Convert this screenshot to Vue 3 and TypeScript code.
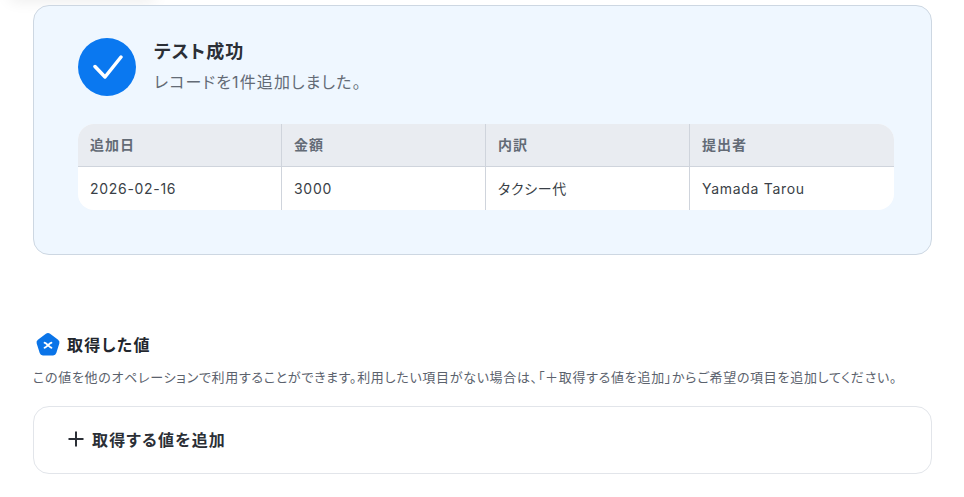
<template>
  <div class="page">
    <div class="top-glow"></div>
    <section class="result-card">
      <div class="result-head">
        <div class="check-circle">
          <svg width="32" height="26" viewBox="0 0 32 26" fill="none">
            <path d="M4 12.5 L14 23 L30 3" stroke="#fff" stroke-width="3.5" stroke-linecap="round" stroke-linejoin="round" />
          </svg>
        </div>
        <div class="result-text">
          <h2>テスト成功</h2>
          <p>レコードを1件追加しました。</p>
        </div>
      </div>

      <div class="table">
        <div v-for="col in COLUMNS" :key="col" class="cell th">{{ col }}</div>
        <div v-for="val in ROW" :key="val" class="cell td">{{ val }}</div>
      </div>
    </section>

    <div class="values-title">
      <svg class="pentagon" width="26" height="25" viewBox="0 0 26 24">
        <path d="M10.9 1.2 a3.4 3.4 0 0 1 4.2 0 l8 6 a3.4 3.4 0 0 1 1.2 3.8 l-3 9.6 a3.4 3.4 0 0 1 -3.3 2.4 h-10 a3.4 3.4 0 0 1 -3.3 -2.4 l-3 -9.6 a3.4 3.4 0 0 1 1.2 -3.8 z" fill="#0a74e8" />
        <path d="M9.6 10.2 C11.5 10.2 14.5 15.2 16.4 15.2 M16.4 10.2 C14.5 10.2 11.5 15.2 9.6 15.2" stroke="#fff" stroke-width="1.9" fill="none" stroke-linecap="round" />
      </svg>
      <h3>取得した値</h3>
    </div>
    <p class="values-desc">この値を他のオペレーションで利用することができます。利用したい項目がない場合は、「＋取得する値を追加」からご希望の項目を追加してください。</p>

    <div class="add-box">
      <svg width="16" height="16" viewBox="0 0 16 16">
        <path d="M8 0.5 V15.5 M0.5 8 H15.5" stroke="#2b2f36" stroke-width="2" />
      </svg>
      <span>取得する値を追加</span>
    </div>
  </div>
</template>

<script setup lang="ts">
const COLUMNS = ['追加日', '金額', '内訳', '提出者']
const ROW = ['2026-02-16', '3000', 'タクシー代', 'Yamada Tarou']
</script>

<style>
html,
body {
  background: #fff;
  overflow: hidden;
}
</style>

<style scoped>
.page {
  position: relative;
  width: 964px;
  height: 497px;
  box-sizing: border-box;
  padding: 5px 32px 0 33px;
  font-family: Inter, "Noto Sans CJK JP", sans-serif;
  font-feature-settings: "palt";
  color: #2b2f36;
  overflow: hidden;
}

.top-glow {
  position: absolute;
  left: 10px;
  top: -12px;
  width: 145px;
  height: 12px;
  background: #000;
  opacity: 0.09;
  filter: blur(8px);
}

.result-card {
  position: relative;
  box-sizing: border-box;
  height: 250px;
  padding: 32px 37px 0 44px;
  background: #eff7ff;
  border: 1px solid #cdd7e2;
  border-radius: 16px;
}

.result-head {
  display: flex;
  align-items: center;
  gap: 18px;
}

.check-circle {
  width: 58px;
  height: 58px;
  border-radius: 50%;
  background: #0a78f0;
  display: flex;
  align-items: center;
  justify-content: center;
}

.result-text h2 {
  margin: -2px 0 0;
  font-size: 18px;
  line-height: 26px;
  font-weight: 700;
  letter-spacing: 0.065em;
}

.result-text p {
  margin: 5px 0 0;
  font-size: 16px;
  line-height: 24px;
  color: #636b76;
  letter-spacing: 0.07em;
}

.table {
  display: grid;
  grid-template-columns: repeat(4, 204px);
  grid-template-rows: 43px 43px;
  margin-top: 28px;
  border-radius: 16px;
  overflow: hidden;
  background: #fff;
}

.cell {
  display: flex;
  align-items: center;
  padding: 0 12px;
  box-sizing: border-box;
  font-size: 14px;
  line-height: 20px;
  border-right: 1px solid #cfd4dc;
}

.cell:nth-child(4n) {
  border-right: none;
}

.th {
  background: #e9ecf1;
  border-bottom: 1px solid #cfd4dc;
  color: #636b76;
  font-weight: 700;
  letter-spacing: 0.07em;
}

.td {
  color: #3a3f47;
  letter-spacing: 0.05em;
}

.values-title {
  display: flex;
  align-items: center;
  gap: 6px;
  margin-top: 77px;
  padding-left: 2px;
}

.values-title h3 {
  margin: 0;
  font-size: 16px;
  line-height: 24px;
  font-weight: 700;
  color: #23272e;
  letter-spacing: 0.08em;
}

.values-desc {
  margin: 11px 0 0;
  font-size: 13px;
  line-height: 18px;
  color: #5b626d;
  white-space: nowrap;
  letter-spacing: 0.054em;
}

.add-box {
  display: flex;
  align-items: center;
  gap: 8px;
  box-sizing: border-box;
  height: 68px;
  margin-top: 20px;
  padding: 0 0 2px 34px;
  border: 1px solid #e2e5ea;
  border-radius: 16px;
  font-size: 16px;
  font-weight: 700;
  letter-spacing: 0.075em;
}
</style>
